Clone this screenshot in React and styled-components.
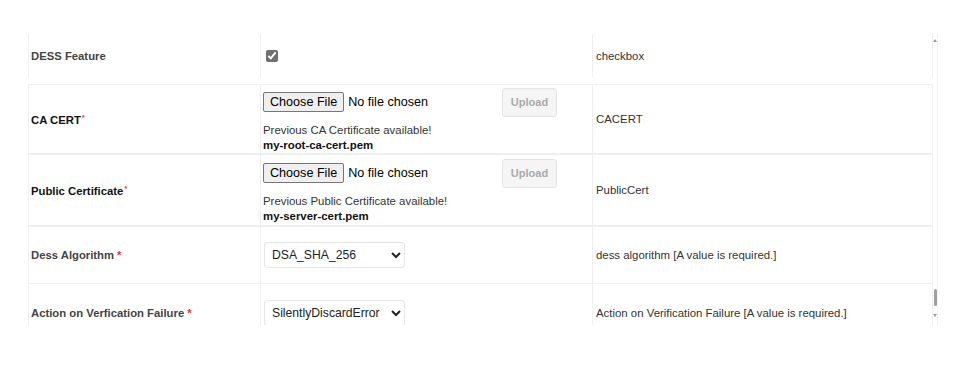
import React from "react";
import styled, { createGlobalStyle } from "styled-components";

const Global = createGlobalStyle`
  html, body { margin: 0; padding: 0; background: #fff; }
  body { font-family: "Liberation Sans", Arial, sans-serif; color: #333; }
`;

const Page = styled.div`
  padding: 34px 0 0 28px;
  display: flex;
  align-items: flex-start;
`;

const Viewport = styled.div`
  width: 905px;
  height: 291px;
  overflow: hidden;
`;

const Table = styled.div`
  display: flex;
  flex-direction: column;
`;

const Row = styled.div`
  display: grid;
  grid-template-columns: 232px 332px 341px;
  height: ${(p) => p.$h}px;
  box-sizing: border-box;
  border-bottom: ${(p) => p.$bw || 1}px solid #efefef;
  padding-bottom: ${(p) => p.$pb || 0}px;
`;

const Cell = styled.div`
  display: flex;
  flex-direction: ${(p) => (p.$col ? "column" : "row")};
  justify-content: ${(p) => (p.$col ? "center" : "flex-start")};
  align-items: ${(p) => (p.$col ? "flex-start" : "center")};
  border-left: 1px solid #efefef;
  border-right: ${(p) => (p.$last ? "1px solid #efefef" : "none")};
  padding-left: ${(p) => p.$pl ?? 2}px;
  padding-top: ${(p) => p.$pt || 0}px;
  box-sizing: border-box;
  min-width: 0;
`;

const Label = styled.span`
  font-size: 11.3px;
  font-weight: bold;
  color: ${(p) => (p.$dark ? "#111" : "#444")};
`;

const Sup = styled.sup`
  color: #e33;
  font-size: 8px;
  vertical-align: 4px;
  margin-left: 1px;
`;

const Req = styled.span`
  color: #e33;
  margin-left: 3px;
`;

const Desc = styled.span`
  font-size: 11.4px;
  color: #333;
`;

const Check = styled.input`
  width: 12px;
  height: 12px;
  margin: 0 0 0 3px;
  accent-color: #707070;
`;

const FileRow = styled.div`
  display: flex;
  align-items: center;
  height: 29px;
`;

const FileInput = styled.input`
  width: 239px;
  font-family: "Liberation Sans", Arial, sans-serif;
  font-size: 12.6px;
  color: #000;
  &::file-selector-button {
    font-family: "Liberation Sans", Arial, sans-serif;
    font-size: 12.6px;
    height: 20px;
    padding: 0 6px;
    margin-right: 4px;
    border: 1px solid #767676;
    border-radius: 2px;
    background: #efefef;
    color: #000;
  }
`;

const UploadButton = styled.button`
  width: 55px;
  height: 29px;
  box-sizing: border-box;
  border: 1px solid #e4e4e4;
  border-radius: 3px;
  background: #f5f5f5;
  color: #aaa;
  font-family: "Liberation Sans", Arial, sans-serif;
  font-weight: bold;
  font-size: 11px;
  padding: 0;
`;

const Note = styled.div`
  font-size: 11.4px;
  line-height: 15px;
  margin-top: ${(p) => p.$mt || 0}px;
  font-weight: ${(p) => (p.$bold ? "bold" : "normal")};
  color: ${(p) => (p.$bold ? "#111" : "#333")};
`;

const Select = styled.select`
  width: 141px;
  height: 26px;
  margin-left: 1px;
  border: 1px solid #e6e6e6;
  border-radius: 3px;
  background: #fff;
  font-family: "Liberation Sans", Arial, sans-serif;
  font-size: 12.2px;
  color: #222;
  padding-left: 3px;
`;

const Scrollbar = styled.div`
  width: 5px;
  height: 291px;
  border-right: 1px solid #f2f2f2;
  display: flex;
  flex-direction: column;
  align-items: center;
  padding-top: 5px;
  box-sizing: border-box;
`;

const Arrow = styled.div`
  width: 0;
  height: 0;
  border-left: 2px solid transparent;
  border-right: 2px solid transparent;
  ${(p) =>
    p.$down
      ? "border-top: 3px solid #999; margin-top: 8px;"
      : "border-bottom: 3px solid #999;"}
`;

const Thumb = styled.div`
  margin-top: auto;
  width: 3px;
  height: 17px;
  border-radius: 2px;
  background: #a0a0a0;
`;

const Spacer = styled.div`
  height: 8px;
`;

function FileCell({ note, file }) {
  return (
    <Cell $col $pl={2} $pt={2}>
      <FileRow>
        <FileInput type="file" />
        <UploadButton disabled>Upload</UploadButton>
      </FileRow>
      <Note $mt={6}>{note}</Note>
      <Note $bold>{file}</Note>
    </Cell>
  );
}

export default function App() {
  return (
    <>
      <Global />
      <Page>
        <Viewport>
          <Table>
            <Row $h={51} $pb={7}>
              <Cell $pl={2}>
                <Label>DESS Feature</Label>
              </Cell>
              <Cell>
                <Check type="checkbox" checked readOnly onChange={() => {}} />
              </Cell>
              <Cell $last $pl={3}>
                <Desc>checkbox</Desc>
              </Cell>
            </Row>
            <Row $h={70} $bw={2}>
              <Cell $pl={2}>
                <Label $dark>
                  CA CERT<Sup>*</Sup>
                </Label>
              </Cell>
              <FileCell
                note="Previous CA Certificate available!"
                file="my-root-ca-cert.pem"
              />
              <Cell $last $pl={3}>
                <Desc>CACERT</Desc>
              </Cell>
            </Row>
            <Row $h={72} $bw={2}>
              <Cell $pl={2}>
                <Label $dark>
                  Public Certificate<Sup>*</Sup>
                </Label>
              </Cell>
              <FileCell
                note="Previous Public Certificate available!"
                file="my-server-cert.pem"
              />
              <Cell $last $pl={3}>
                <Desc>PublicCert</Desc>
              </Cell>
            </Row>
            <Row $h={57}>
              <Cell $pl={2}>
                <Label>
                  Dess Algorithm<Req>*</Req>
                </Label>
              </Cell>
              <Cell>
                <Select defaultValue="DSA_SHA_256">
                  <option>DSA_SHA_256</option>
                  <option>RSA_SHA_256</option>
                </Select>
              </Cell>
              <Cell $last $pl={3}>
                <Desc>dess algorithm [A value is required.]</Desc>
              </Cell>
            </Row>
            <Row $h={58}>
              <Cell $pl={2}>
                <Label>
                  Action on Verfication Failure<Req>*</Req>
                </Label>
              </Cell>
              <Cell>
                <Select defaultValue="SilentlyDiscardError">
                  <option>SilentlyDiscardError</option>
                  <option>Reject</option>
                </Select>
              </Cell>
              <Cell $last $pl={3}>
                <Desc>Action on Verification Failure [A value is required.]</Desc>
              </Cell>
            </Row>
          </Table>
        </Viewport>
        <Scrollbar>
          <Arrow />
          <Thumb />
          <Arrow $down />
          <Spacer />
        </Scrollbar>
      </Page>
    </>
  );
}
